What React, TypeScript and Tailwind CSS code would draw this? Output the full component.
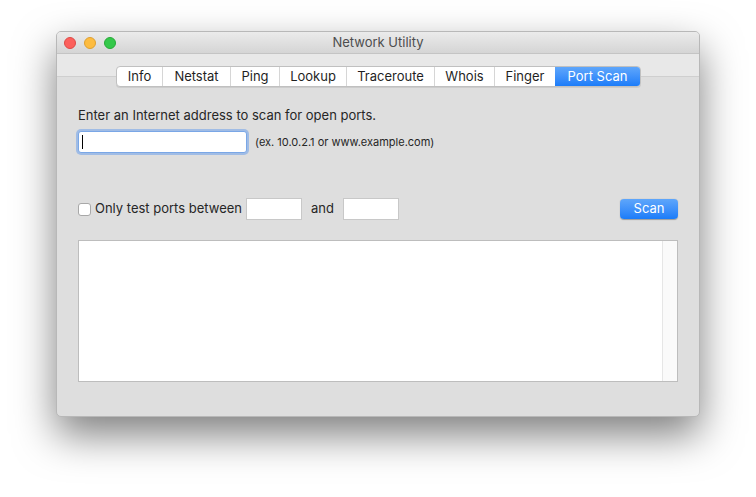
const tabs = ['Info', 'Netstat', 'Ping', 'Lookup', 'Traceroute', 'Whois', 'Finger', 'Port Scan']
const tabWidths = ['w-[45px]', 'w-[68px]', 'w-[49px]', 'w-[67px]', 'w-[88px]', 'w-[60px]', 'w-[61px]', 'w-[85px]']

export default function App() {
  return (
    <div
      className="w-[756px] h-[497px] bg-white pt-[31px] pl-[56px] text-[#262626]"
      style={{ fontFamily: '"Helvetica Neue", Inter, "Liberation Sans", sans-serif' }}
    >
      <div className="w-[644px] h-[386px] rounded-[5px] bg-[#dedede] border border-[#b8b8b8] shadow-[0_18px_40px_rgba(0,0,0,0.5)] overflow-hidden flex flex-col">
        {/* title bar */}
        <div className="relative h-[22px] flex items-center justify-center bg-gradient-to-b from-[#ebebeb] to-[#d5d5d5] border-b border-[#c4c4c4]">
          <div className="absolute left-[7px] top-[5px] flex gap-[8px]">
            <span className="w-[12px] h-[12px] rounded-full bg-[#fc605c] border border-[#de4a46]" />
            <span className="w-[12px] h-[12px] rounded-full bg-[#fdbc40] border border-[#dfa030]" />
            <span className="w-[12px] h-[12px] rounded-full bg-[#34c84a] border border-[#27aa37]" />
          </div>
          <span className="text-[13px] text-[#4d4d4d] pt-px">Network Utility</span>
        </div>

        {/* tab band */}
        <div className="relative h-[23px] bg-[#e8e8e8] border-b border-[#cfcfcf] z-10">
          <div className="absolute left-[59px] top-[12px] flex h-[21px] rounded-[4px] border border-[#c0c0c0] bg-white shadow-[0_1px_0_rgba(0,0,0,0.08)] overflow-hidden">
            {tabs.map((t, i) => {
              const active = t === 'Port Scan'
              return (
                <div
                  key={t}
                  className={`${tabWidths[i]} flex items-center justify-center text-[13px] ${
                    i > 0 ? 'border-l border-[#d6d6d6]' : ''
                  } ${active ? 'bg-gradient-to-b from-[#5ea6fb] to-[#1a7cf9] text-white border-l-0' : 'text-[#1f1f1f]'}`}
                >
                  {t}
                </div>
              )
            })}
          </div>
        </div>

        {/* content */}
        <div className="flex-1 px-[21px] pt-[30px]">
          <p className="text-[13px] leading-[16px]">Enter an Internet address to scan for open ports.</p>
          <div className="mt-[8px] flex items-center gap-[8px]">
            <div className="w-[169px] h-[22px] rounded-[3px] bg-white border border-[#7aa7e6] shadow-[0_0_0_2px_rgba(110,160,235,0.55)] flex items-center pl-[3px]">
              <span className="w-px h-[14px] bg-black" />
            </div>
            <span className="text-[11px]">(ex. 10.0.2.1 or www.example.com)</span>
          </div>

          <div className="mt-[45px] flex items-center">
            <span className="w-[13px] h-[13px] rounded-[3px] bg-white border border-[#a8a8a8]" />
            <span className="ml-[4px] text-[13px]">Only test ports between</span>
            <span className="ml-[4px] w-[56px] h-[22px] bg-white border border-[#c8c8c8]" />
            <span className="ml-[9px] text-[13px]">and</span>
            <span className="ml-[9px] w-[56px] h-[22px] bg-white border border-[#c8c8c8]" />
            <button className="ml-auto w-[58px] h-[20px] rounded-[4px] bg-gradient-to-b from-[#5ea6fb] to-[#1a7cf9] text-white text-[13px] shadow-[0_0.5px_1px_rgba(0,0,0,0.3)]">
              Scan
            </button>
          </div>

          <div className="mt-[20px] h-[142px] bg-white border border-[#bdbdbd] flex justify-end">
            <div className="w-[15px] h-full bg-[#fafafa] border-l border-[#e6e6e6]" />
          </div>
        </div>
      </div>
    </div>
  )
}
